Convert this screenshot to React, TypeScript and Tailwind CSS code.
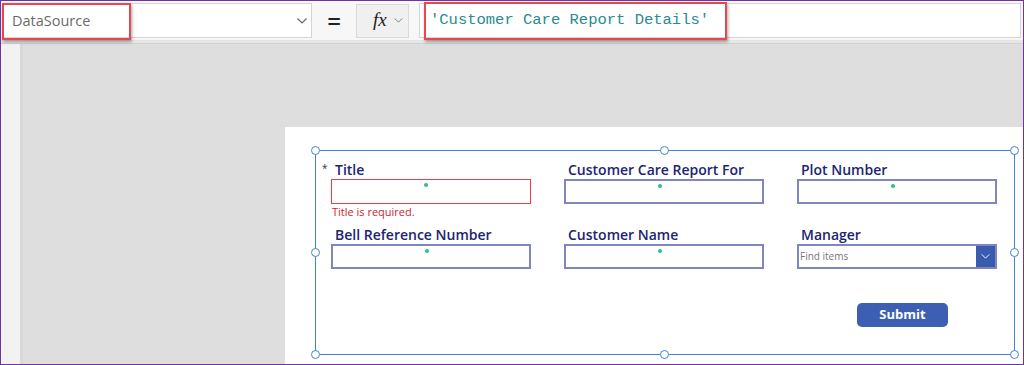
import React from 'react';

const SANS = { fontFamily: '"Open Sans", "Noto Sans", sans-serif' };

function Chevron({ className }: { className?: string }) {
  return (
    <svg viewBox="0 0 10 6" className={className} fill="none" stroke="currentColor" strokeWidth="1.1">
      <path d="M0.5 0.5 L5 5 L9.5 0.5" />
    </svg>
  );
}

function Handle({ className }: { className: string }) {
  return (
    <div
      className={`absolute w-[9px] h-[9px] rounded-full bg-white border-[1.5px] border-[#3f86d0] ${className}`}
    />
  );
}

interface FieldProps {
  label: string;
  required?: boolean;
  error?: string;
  invalid?: boolean;
  tall?: boolean;
}

function Field({ label, required, error, invalid, tall }: FieldProps) {
  return (
    <div className={`relative flex flex-col ${tall ? 'h-[65px]' : ''}`}>
      {required && (
        <span className="absolute -left-[9px] top-[1px] text-[10px] text-[#333]">*</span>
      )}
      <div className="h-[19px] pl-[4px] text-[14px] leading-[19px] font-semibold text-[#1b2571] whitespace-nowrap">
        {label}
      </div>
      <div
        className={`relative h-[25px] bg-white ${
          invalid ? 'border-[1.5px] border-[#f53b42]' : 'border-2 border-[#7f86bd]'
        }`}
      >
        <span className="absolute left-[92px] top-[3px] w-[4px] h-[4px] rounded-full bg-[#28c08e]" />
      </div>
      {error && <div className="mt-[1px] pl-[1px] text-[11px] leading-[14px] text-[#c9262e]">{error}</div>}
    </div>
  );
}

export default function App() {
  return (
    <div
      className="w-[1024px] h-[365px] border border-[#7232a2] flex flex-col overflow-hidden bg-[#f7f7f7]"
      style={SANS}
    >
      {/* formula bar */}
      <div className="h-[39px] flex items-center bg-[#f7f7f7]">
        <div className="relative ml-[1px] w-[310px] h-[35px] bg-white border border-[#d4d4d4] flex items-center">
          <span className="pl-[9px] text-[14.5px] text-[#6b6b6b]">DataSource</span>
          <Chevron className="ml-auto mr-[4px] w-[10px] h-[6px] text-[#666]" />
          <div className="absolute -left-[1px] -top-[1px] w-[129px] h-[37px] border-[2.5px] border-[#e84650] shadow-[1px_2px_3px_rgba(0,0,0,0.35)]" />
        </div>
        <div className="w-[44px] flex justify-center text-[24px] leading-none font-semibold text-[#222]">=</div>
        <div className="w-[53px] h-[34px] bg-[#f0f0f0] border border-[#d9d9d9] flex items-center pl-[16px]">
          <span className="text-[19px] italic text-[#222]" style={{ fontFamily: '"Liberation Serif", serif' }}>
            fx
          </span>
          <Chevron className="ml-[7px] w-[9px] h-[5px] text-[#777]" />
        </div>
        <div className="relative ml-[10px] mr-[2px] flex-1 h-[35px] bg-white border border-[#d4d4d4] flex items-center">
          <span
            className="pl-[10px] pt-[1px] text-[15.5px] text-[#2b8a92] whitespace-nowrap"
            style={{ fontFamily: '"Liberation Mono", monospace' }}
          >
            'Customer Care Report Details'
          </span>
          <div className="absolute left-[4px] -top-[2px] w-[303px] h-[38px] border-[2.5px] border-[#e84650] shadow-[1px_2px_3px_rgba(0,0,0,0.35)]" />
        </div>
      </div>
      <div className="h-[4px] bg-[#e6e6e6] border-b border-[#d2d2d2]" />

      {/* workspace */}
      <div className="flex-1 flex">
        <div className="w-[19px] bg-[#f2f2f2]" />
        <div className="flex-1 flex flex-col bg-[#dedede] border-l-[3px] border-[#d8d8d8] pl-[262px] pt-[83px]">
          <div className="flex-1 bg-white pl-[30px] pt-[23px]">
            <div className="relative w-[700px] h-[205px] border border-[#3f86d0] pl-[15px] pt-[9px]">
              <Handle className="-left-[5px] -top-[5px]" />
              <Handle className="left-[344px] -top-[5px]" />
              <Handle className="-right-[5px] -top-[5px]" />
              <Handle className="-left-[5px] top-[97px]" />
              <Handle className="-right-[5px] top-[97px]" />
              <Handle className="-left-[5px] -bottom-[5px]" />
              <Handle className="left-[344px] -bottom-[5px]" />
              <Handle className="-right-[5px] -bottom-[5px]" />

              <div className="grid grid-cols-[200px_200px_200px] gap-x-[33px]">
                <Field label="Title" required invalid error="Title is required." tall />
                <Field label="Customer Care Report For" tall />
                <Field label="Plot Number" tall />
                <Field label="Bell Reference Number" />
                <Field label="Customer Name" />
                <div className="flex flex-col">
                  <div className="h-[19px] pl-[4px] text-[14px] leading-[19px] font-semibold text-[#1b2571]">
                    Manager
                  </div>
                  <div className="h-[25px] bg-white border-2 border-[#7f86bd] flex items-center">
                    <span className="pl-[1px] text-[10px] text-[#777]">Find items</span>
                    <div className="ml-auto w-[19px] h-full bg-[#3b5cae] flex items-center justify-center">
                      <Chevron className="w-[9px] h-[5px] text-white" />
                    </div>
                  </div>
                  <button className="ml-[60px] mt-[34px] w-[91px] h-[24px] rounded-[5px] bg-[#3d5fb3] text-white text-[13px] font-bold">
                    Submit
                  </button>
                </div>
              </div>
            </div>
          </div>
        </div>
      </div>
    </div>
  );
}
